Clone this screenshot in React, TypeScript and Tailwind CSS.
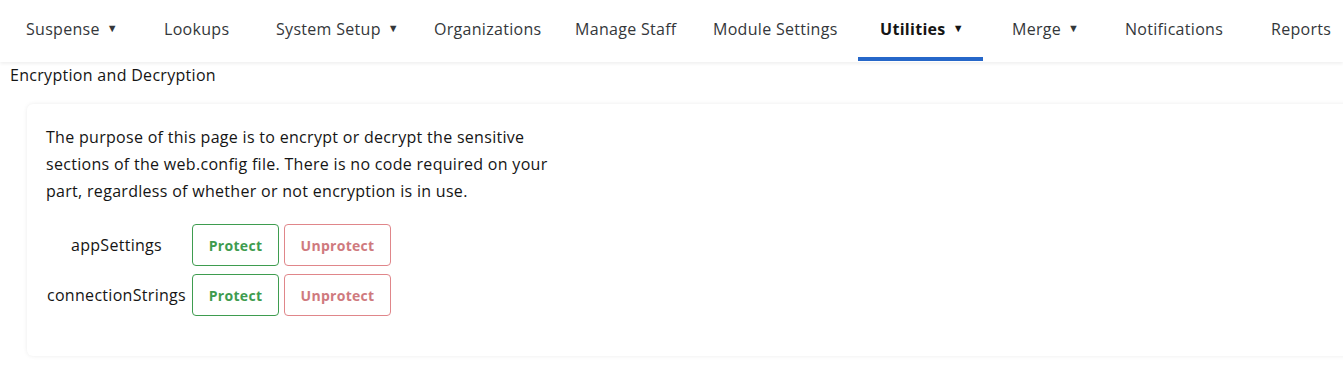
import React from "react";

const items = [
  { label: "Suspense", caret: true, w: "w-[138px]" },
  { label: "Lookups", w: "w-[112px]" },
  { label: "System Setup", caret: true, w: "w-[158px]" },
  { label: "Organizations", w: "w-[141px]" },
  { label: "Manage Staff", w: "w-[138px]" },
  { label: "Module Settings", w: "w-[167px]" },
  { label: "Utilities", caret: true, active: true, w: "w-[132px]" },
  { label: "Merge", caret: true, w: "w-[113px]" },
  { label: "Notifications", w: "w-[146px]" },
  { label: "Reports", w: "w-[94px]" },
];

function Row({ label }: { label: string }) {
  return (
    <div className="flex items-center gap-[5px]">
      <div className="w-[141px] text-center text-[16px] tracking-[0.3px] whitespace-nowrap text-[#151515]">{label}</div>
      <button className="h-[42px] w-[87px] rounded-[4px] border border-[#3e9c4f] text-[14px] font-bold tracking-[0.3px] text-[#3e9c4f]">
        Protect
      </button>
      <button className="h-[42px] w-[107px] rounded-[4px] border border-[#e0868a] text-[14px] font-bold tracking-[0.3px] text-[#cf7a7e]">
        Unprotect
      </button>
    </div>
  );
}

export default function App() {
  return (
    <div
      className="min-h-[368px] overflow-hidden bg-white text-[#151515]"
      style={{ fontFamily: '"Open Sans", "Noto Sans", sans-serif' }}
    >
      <nav className="flex h-[62px] items-stretch pl-[4px] shadow-[0_2px_3px_rgba(0,0,0,0.06)] whitespace-nowrap">
        {items.map((it) => (
          <div
            key={it.label}
            className={
              "relative flex shrink-0 items-center pb-[5px] pl-[22px] text-[16px] tracking-[0.3px] " +
              it.w +
              " " +
              (it.active ? "font-bold text-[#151515]" : "text-[#34373a]")
            }
          >
            <span>{it.label}</span>
            {it.caret && <span className="ml-[7px] text-[11px]">▼</span>}
            {it.active && <span className="absolute bottom-[1px] left-0 h-[4px] w-[125px] bg-[#2667c9]" />}
          </div>
        ))}
      </nav>
      <div className="px-[10px] pt-[1px] text-[16px] leading-[24px] tracking-[0.3px]">Encryption and Decryption</div>
      <div className="mt-[17px] ml-[27px] -mr-[20px] rounded-[6px] bg-white px-[19px] pt-[20px] pb-[40px] shadow-[0_0_4px_rgba(0,0,0,0.08)]">
        <p className="w-[510px] text-[16px] leading-[27px] tracking-[0.3px] text-[#151515]">
          The purpose of this page is to encrypt or decrypt the sensitive sections of the web.config file. There is no
          code required on your part, regardless of whether or not encryption is in use.
        </p>
        <div className="mt-[19px] flex flex-col gap-[8px]">
          <Row label="appSettings" />
          <Row label="connectionStrings" />
        </div>
      </div>
    </div>
  );
}
